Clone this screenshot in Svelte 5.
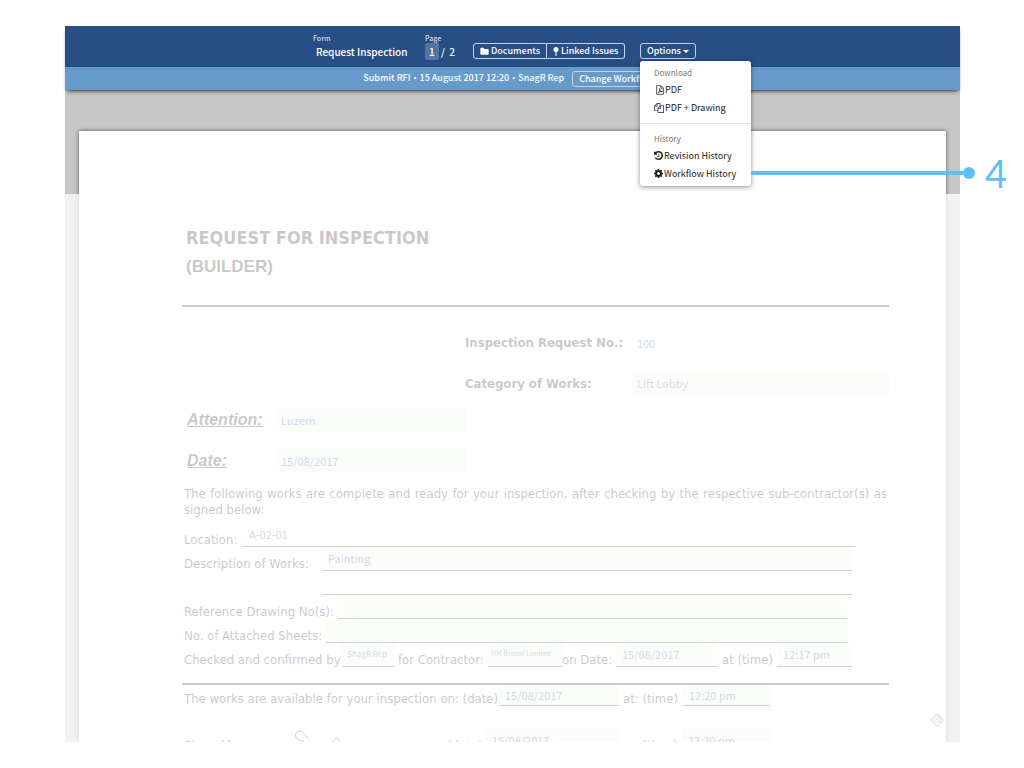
<script lang="ts">
  let menuOpen = $state(true);

  let form = $state({
    requestNo: '100',
    category: 'Lift Lobby',
    attention: 'Luzern',
    date: '15/08/2017',
    location: 'A-02-01',
    description: 'Painting',
    description2: '',
    drawings: '',
    sheets: '',
    checkedBy: 'SnagR Rep',
    contractor: 'HM Bristol Limited',
    checkedDate: '15/08/2017',
    checkedTime: '12:17 pm',
    availableDate: '15/08/2017',
    availableTime: '12:20 pm',
    signedDate: '15/08/2017',
    signedTime: '12:20 pm'
  });
</script>

<div class="frame">
  <header>
    <div class="topbar">
      <div class="group form-name">
        <span class="caption">Form</span>
        <span class="value indent">Request Inspection</span>
      </div>
      <div class="group pages">
        <span class="caption">Page</span>
        <span class="value"><b>1</b> /&nbsp; 2</span>
      </div>
      <div class="btn-group">
        <button class="btn">
          <svg class="icon" viewBox="0 0 1792 1792"><path d="M1728 608v704q0 92-66 158t-158 66h-1216q-92 0-158-66t-66-158v-960q0-92 66-158t158-66h320q92 0 158 66t66 158v32h672q92 0 158 66t66 158z" /></svg>
          Documents
        </button>
        <button class="btn">
          <svg class="icon pin" viewBox="0 0 6 10"><circle cx="3" cy="2.8" r="2.8" /><path d="M2.4 5h1.2v4.4L3 10l-.6-.6z" /></svg>
          Linked Issues
        </button>
      </div>
      <div class="dropdown">
        <button class="btn" aria-expanded={menuOpen} onclick={() => (menuOpen = !menuOpen)}>
          Options <span class="caret"></span>
        </button>
        {#if menuOpen}
          <div class="menu">
            <span class="menu-head">Download</span>
            <button class="item">
              <svg class="icon line" viewBox="0 0 13 16"><path d="M1 1h7l4 4v10H1zM8 1v4h4M3 13c2-1 4-5 3-8M5.500 7c1 3 3 4 5 3.500M3 13c2-2 4-3 7-2.500" /></svg>
              PDF
            </button>
            <button class="item">
              <svg class="icon copy" viewBox="0 0 1792 1792"><path d="M1696 384q40 0 68 28t28 68v1216q0 40-28 68t-68 28h-960q-40 0-68-28t-28-68v-288h-544q-40 0-68-28t-28-68v-672q0-40 20-88t48-76l408-408q28-28 76-48t88-20h416q40 0 68 28t28 68v328q68-40 128-40h416zm-544 213l-299 299h299v-299zm-640-384l-299 299h299v-299zm196 647l316-316v-416h-384v416q0 40-28 68t-68 28h-416v640h512v-256q0-40 20-88t48-76zm956 804v-1152h-384v416q0 40-28 68t-68 28h-416v640h896z" /></svg>
              PDF + Drawing
            </button>
            <hr />
            <span class="menu-head">History</span>
            <button class="item">
              <svg class="icon" viewBox="128 128 1536 1536"><path d="M1664 896q0 156-61 298t-164 245-245 164-298 61q-172 0-327-72.500t-264-204.500q-7-10-6.500-22.500t8.500-20.500l137-138q10-9 25-9 16 2 23 12 73 95 179 147t225 52q104 0 198.500-40.500t163.500-109.500 109.500-163.500 40.500-198.500-40.500-198.500-109.500-163.500-163.500-109.500-198.500-40.500q-98 0-188 35.500t-160 101.500l137 138q31 30 14 69-17 40-59 40h-448q-26 0-45-19t-19-45v-448q0-42 40-59 39-17 69 14l130 129q107-101 244.500-156.500t284.500-55.500q156 0 298 61t245 164 164 245 61 298zm-640-288v448q0 14-9 23t-23 9h-320q-14 0-23-9t-9-23v-64q0-14 9-23t23-9h224v-352q0-14 9-23t23-9h64q14 0 23 9t9 23z" /></svg>
              Revision History
            </button>
            <div class="marked">
              <button class="item">
                <svg class="icon" viewBox="128 128 1536 1536"><path d="M1152 896q0-106-75-181t-181-75-181 75-75 181 75 181 181 75 181-75 75-181zm512-109v222q0 12-8 23t-20 13l-185 28q-19 54-39 91 35 50 107 138 10 12 10 25t-9 23q-27 37-99 108t-94 71q-12 0-26-9l-138-108q-44 23-91 38-16 136-29 186-7 28-36 28h-222q-14 0-24.500-8.500t-11.500-21.500l-28-184q-49-16-90-37l-141 107q-10 9-25 9-14 0-25-11-126-114-165-168-7-10-7-23 0-12 8-23 15-21 51-66.500t54-70.500q-27-50-41-99l-183-27q-13-2-21-12.500t-8-23.500v-222q0-12 8-23t19-13l186-28q14-46 39-92-40-57-107-138-10-12-10-24 0-10 9-23 26-36 98.500-107.500t94.500-71.500q13 0 26 10l138 107q44-23 91-38 16-136 29-186 7-28 36-28h222q14 0 24.500 8.500t11.500 21.500l28 184q49 16 90 37l142-107q9-9 24-9 13 0 25 10 129 119 165 170 7 8 7 22 0 12-8 23-15 21-51 66.500t-54 70.500q26 50 41 98l183 28q13 2 21 12.500t8 23.500z" /></svg>
                Workflow History
              </button>
              <div class="callout"><i class="rule"></i><i class="dot"></i><span>4</span></div>
            </div>
          </div>
        {/if}
      </div>
    </div>
    <div class="statusbar">
      <div class="status">
        <span>Submit RFI</span><span>·</span><span>15 August 2017 12:20</span><span>·</span><span>SnagR Rep</span>
      </div>
      <button class="btn">Change Workflow</button>
    </div>
  </header>

  <main>
    <form class="paper">
      <h1>REQUEST FOR INSPECTION</h1>
      <h2>(BUILDER)</h2>
      <hr />

      <div class="row head">
        <label for="request-no">Inspection Request No.:</label>
        <input id="request-no" class="plain" bind:value={form.requestNo} />
      </div>
      <div class="row head">
        <label for="category">Category of Works:</label>
        <input id="category" bind:value={form.category} />
      </div>
      <div class="row who">
        <label for="attention">Attention:</label>
        <input id="attention" bind:value={form.attention} />
      </div>
      <div class="row who">
        <label for="date">Date:</label>
        <input id="date" bind:value={form.date} />
      </div>

      <p>The following works are complete and ready for your inspection, after checking by the respective sub-contractor(s) as signed below:</p>

      <div class="row line location">
        <label for="location">Location:</label>
        <input id="location" class="plain" bind:value={form.location} />
      </div>
      <div class="row line description">
        <label for="description">Description of Works:</label>
        <input id="description" bind:value={form.description} />
      </div>
      <div class="row line description">
        <span></span>
        <input class="plain" aria-label="Description of Works, second line" bind:value={form.description2} />
      </div>
      <div class="row line drawings">
        <label for="drawings">Reference Drawing No(s):</label>
        <input id="drawings" bind:value={form.drawings} />
      </div>
      <div class="row line sheets">
        <label for="sheets">No. of Attached Sheets:</label>
        <input id="sheets" bind:value={form.sheets} />
      </div>
      <div class="row line checked">
        <label for="checked-by">Checked and confirmed by</label>
        <input id="checked-by" class="small" bind:value={form.checkedBy} />
        <label class="gap" for="contractor">for Contractor:</label>
        <input id="contractor" class="small tiny" bind:value={form.contractor} />
        <label for="checked-date">on Date:</label>
        <input id="checked-date" bind:value={form.checkedDate} />
        <label class="gap" for="checked-time">at (time)</label>
        <input id="checked-time" bind:value={form.checkedTime} />
      </div>
      <hr class="split" />
      <div class="row line available">
        <label for="available-date">The works are available for your inspection on: (date)</label>
        <input id="available-date" bind:value={form.availableDate} />
        <label class="gap" for="available-time">at: (time)</label>
        <input id="available-time" bind:value={form.availableTime} />
      </div>
      <div class="row line signed">
        <span>Signed by:</span>
        <svg class="signature" viewBox="0 0 60 24"><path d="M10 12C3 12 -1 6 3 3c4-3 6 1 12 7M38 15c2-5 5-8 7-4l3 6" /></svg>
        <label for="signed-date">(date)</label>
        <input id="signed-date" bind:value={form.signedDate} />
        <label for="signed-time">(time)</label>
        <input id="signed-time" bind:value={form.signedTime} />
      </div>
    </form>
    <div class="dim"></div>
    <svg class="badge" viewBox="0 0 16 16"><rect x="2.500" y="2.500" width="11" height="11" rx="2" transform="rotate(45 8 8)" /><path d="M4.500 8.500l4-4M6 10.500l4-3.500M8 12l2-1.500" /></svg>
  </main>
</div>

<style>
  :global(body) {
    margin: 0;
    background: #fff;
  }
  .frame {
    display: flex;
    flex-direction: column;
    height: calc(100vh - 52px);
    margin: 26px 64px 26px 65px;
    font-family: "Noto Sans CJK SC", "Open Sans", sans-serif;
  }
  button, input {
    font-family: inherit;
    margin: 0;
  }

  /* toolbar */
  header {
    position: relative;
    z-index: 2;
    color: #fff;
    font-size: 10px;
    font-weight: 500;
    box-shadow: 0 3px 4px -2px rgba(0, 0, 0, 0.8);
  }
  .topbar {
    display: flex;
    justify-content: center;
    align-items: flex-end;
    height: 41px;
    padding: 0 18px 8px 0;
    box-sizing: border-box;
    background: #284f85;
  }
  .group {
    display: flex;
    flex-direction: column;
  }
  .form-name {
    width: 112px;
  }
  .pages {
    width: 48px;
  }
  .caption {
    font-size: 7px;
    line-height: 11px;
    color: #d3dcea;
  }
  .value {
    line-height: 15px;
    white-space: nowrap;
  }
  .indent {
    padding-left: 3px;
  }
  .value b {
    padding: 1px 4px;
    border-radius: 2px;
    background: #54759f;
    font-weight: 500;
  }
  .btn {
    display: flex;
    align-items: center;
    gap: 2px;
    height: 16px;
    padding: 0 6px;
    border: 1px solid #c3d3e6;
    border-radius: 3px;
    background: none;
    color: #fff;
    font-size: 9px;
    font-weight: 500;
    line-height: 14px;
    white-space: nowrap;
  }
  .btn-group {
    display: flex;
    width: 151px;
    margin-right: 16px;
  }
  .btn-group .btn:first-child {
    border-radius: 3px 0 0 3px;
  }
  .btn-group .btn:last-child {
    border-left: 0;
    border-radius: 0 3px 3px 0;
  }
  .icon {
    width: 9px;
    height: 9px;
    flex: none;
    fill: currentColor;
  }
  .icon.pin {
    width: 6px;
  }
  .icon.copy {
    width: 10px;
    height: 10px;
  }
  .icon.line {
    width: 8px;
    height: 10px;
    fill: none;
    stroke: currentColor;
    stroke-width: 1.2;
  }
  .caret {
    border: 3px solid transparent;
    border-top-color: #fff;
    border-bottom: 0;
  }
  .dropdown {
    position: relative;
    width: 54px;
  }
  .menu {
    position: absolute;
    top: 18px;
    left: 0;
    display: flex;
    flex-direction: column;
    width: 111px;
    padding: 3px 0;
    border-radius: 3px;
    background: #fff;
    box-shadow: 0 1px 5px rgba(0, 0, 0, 0.45);
  }
  .menu-head {
    padding-left: 14px;
    color: #777;
    font-size: 8px;
    font-weight: 400;
    line-height: 17px;
  }
  .menu hr {
    width: 100%;
    height: 1px;
    margin: 6px 0;
    border: 0;
    background: #e2e2e2;
  }
  .item {
    display: flex;
    align-items: center;
    justify-content: flex-start;
    gap: 1px;
    height: 18px;
    padding: 0 0 1px 14px;
    border: 0;
    background: none;
    color: #222;
    font-size: 9px;
    font-weight: 400;
    white-space: nowrap;
  }
  .marked {
    position: relative;
  }
  .callout {
    position: absolute;
    top: 0;
    left: 100%;
    display: flex;
    align-items: center;
    height: 16px;
    color: #5bc0f8;
    font-family: Lato, sans-serif;
    font-size: 38px;
    font-weight: 400;
  }
  .rule {
    width: 212px;
    height: 4px;
    background: #5bc0f8;
  }
  .dot {
    width: 12px;
    height: 12px;
    margin-right: 10px;
    border-radius: 50%;
    background: #5bc0f8;
  }
  .statusbar {
    display: flex;
    justify-content: center;
    align-items: center;
    gap: 8px;
    height: 23px;
    background: #669aca;
    font-size: 9px;
  }
  .status {
    display: flex;
    padding-bottom: 2px;
  }

  /* document */
  main {
    position: relative;
    flex: 1;
    min-height: 0;
    overflow: hidden;
    padding: 41px 14px 0;
    background: #c7c7c7;
  }
  .dim {
    position: absolute;
    inset: 104px 0 0;
    background: rgba(255, 255, 255, 0.77);
    pointer-events: none;
  }
  .paper {
    min-height: 100%;
    padding: 94px 57px 0 103px;
    box-sizing: border-box;
    background: #fff;
    box-shadow: 0 0 4px rgba(0, 0, 0, 0.6);
    color: #141414;
    font-family: "DejaVu Sans Condensed", "DejaVu Sans", sans-serif;
    font-size: 13px;
  }
  h1, h2 {
    margin: 0;
    padding-left: 4px;
    font-size: 18px;
    line-height: 26px;
  }
  h2 {
    margin-top: 3px;
    font-family: "Liberation Sans", sans-serif;
    font-size: 17px;
  }
  .paper hr {
    height: 2px;
    margin: 25px 0 24px;
    border: 0;
    background: #1d1d1d;
  }
  .row {
    display: grid;
    align-items: stretch;
    white-space: nowrap;
  }
  .row input {
    width: 100%;
    min-width: 0;
    padding: 0 5px;
    border: 0;
    border-radius: 0;
    box-sizing: border-box;
    background: #eef7e6;
    color: #2e5aa4;
    font-family: "Noto Sans CJK SC", sans-serif;
    font-size: 11px;
  }
  .row input.plain {
    background: none;
  }
  .head {
    grid-template: 23px / 167px 1fr;
    margin: 0 0 17px 283px;
    font-weight: 700;
    line-height: 23px;
  }
  .head + .head {
    margin-bottom: 0;
  }
  .head + .head label {
    line-height: 25px;
  }
  .who {
    grid-template: 25px / 89px 191px;
    padding-left: 5px;
    margin-top: 13px;
    font-family: "Liberation Sans", sans-serif;
    font-size: 16px;
    font-style: italic;
    font-weight: 700;
    line-height: 25px;
  }
  .who + .who {
    margin-top: 16px;
  }
  .who label {
    text-decoration: underline;
  }
  p {
    margin: 13px 2px 0;
    line-height: 16px;
    text-align: justify;
  }
  .line {
    height: 24px;
    padding-left: 2px;
  }
  .line label, .line span {
    align-self: end;
    line-height: 14px;
  }
  .line input {
    padding: 1px 6px 2px;
    border-bottom: 1px solid #3b3b3b;
  }
  .line .small {
    padding: 0 5px 3px;
    font-size: 8px;
  }
  .line .tiny {
    padding: 0 3px 3px;
    font-size: 7px;
  }
  .line .gap {
    padding-left: 4px;
  }
  .location {
    grid-template-columns: 59px 1fr;
    margin: 5px 33px 0 0;
  }
  .description {
    grid-template-columns: 138px 1fr;
    margin-right: 37px;
  }
  .drawings {
    grid-template-columns: 154px 1fr;
    margin-right: 42px;
  }
  .sheets {
    grid-template-columns: 141px 1fr;
    margin-right: 41px;
  }
  .checked {
    grid-template-columns: 158px 52px 94px 74px 54px 102px 59px 1fr;
    margin-right: 37px;
  }
  .paper .split {
    margin: 16px 0 0;
  }
  .available {
    grid-template-columns: 315px 120px 64px 87px;
    height: 21px;
  }
  .signed {
    grid-template-columns: 105px 158px 39px 156px 40px 88px;
    height: 24px;
    margin-top: 22px;
  }
  .signed label, .signed span {
    line-height: 14px;
  }
  .signed input:first-of-type {
    width: 132px;
  }
  .signature {
    width: 60px;
    height: 24px;
    margin-top: 1px;
    margin-left: 5px;
    fill: none;
    stroke: #141414;
  }
  .badge {
    position: absolute;
    right: 15px;
    bottom: 14px;
    width: 16px;
    height: 16px;
    fill: #ebebeb;
  }
  .badge path {
    fill: none;
    stroke: #fff;
    stroke-width: 1.5;
  }
</style>
